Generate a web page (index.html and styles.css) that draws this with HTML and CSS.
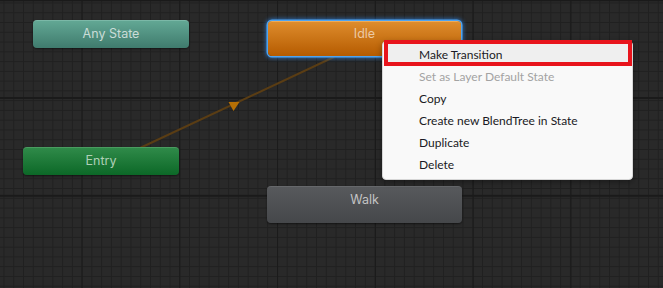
FILE: index.html
```html
<!DOCTYPE html>
<html lang="en">
<head>
    <meta charset="UTF-8">
    <title>Animator</title>
    <link rel="stylesheet" href="styles.css">
</head>
<body>
    <div class="graph">
        <svg class="links" width="663" height="288" viewBox="0 0 663 288">
            <line x1="140" y1="148" x2="334" y2="57" stroke="#5a3d14" stroke-width="2"/>
            <polygon points="228.5,102 239.5,102 233.5,111" fill="#b56f05"/>
        </svg>

        <div class="node any-state">Any State</div>
        <div class="node idle">Idle</div>
        <div class="node entry">Entry</div>
        <div class="node walk">Walk</div>

        <div class="context-menu">
            <div class="menu-item hover">Make Transition</div>
            <div class="menu-item disabled">Set as Layer Default State</div>
            <div class="menu-item">Copy</div>
            <div class="menu-item">Create new BlendTree in State</div>
            <div class="menu-item">Duplicate</div>
            <div class="menu-item">Delete</div>
        </div>
        <div class="highlight-box"></div>
    </div>
</body>
</html>
```

FILE: styles.css
```css
body {
    margin: 0;
    background: #282828;
}
.graph {
    position: relative;
    width: 663px;
    height: 288px;
    overflow: hidden;
    background-color: #292929;
    background-image:
        linear-gradient(to right, #1a1a1a 1px, transparent 1px),
        linear-gradient(to bottom, #1a1a1a 2px, transparent 2px),
        linear-gradient(to right, #202020 1px, transparent 1px),
        linear-gradient(to bottom, #202020 1px, transparent 1px);
    background-size: 97.8px 97.8px, 97.8px 97.8px, 9.78px 9.78px, 9.78px 9.78px;
    background-position: 81.5px 0, 0 97px, 3.5px 0, 0 2.5px;
    font-family: Inter, "Noto Sans", sans-serif;
}
.links {
    position: absolute;
    left: 0;
    top: 0;
}
.node {
    position: absolute;
    box-sizing: border-box;
    border-radius: 4px;
    padding-top: 6px;
    text-align: center;
    font-size: 12.5px;
    line-height: 16px;
    box-shadow: 0 1px 2px rgba(0, 0, 0, 0.5);
}
.any-state {
    left: 33px;
    top: 20px;
    width: 156px;
    height: 28px;
    color: #c9dcd7;
    background: linear-gradient(#62a794, #3f7b6d);
    border-top: 1px solid #7bb8a7;
    padding-top: 5px;
}
.entry {
    left: 23px;
    top: 147px;
    width: 156px;
    height: 28px;
    color: #b0d0b8;
    background: linear-gradient(#2f8a49, #0c6827);
    border-top: 1px solid #4a9c60;
    padding-top: 5px;
}
.idle {
    left: 268px;
    top: 21px;
    width: 193px;
    height: 35px;
    color: #ecc9a4;
    background: linear-gradient(#de8c2c, #b55b00);
    border-top: 1px solid #eeaa55;
    padding-top: 4px;
    box-shadow: 0 0 0 1.5px #4fa4f0, 0 0 4px 2px rgba(45, 135, 235, 0.75);
}
.walk {
    left: 267px;
    top: 186px;
    width: 195px;
    height: 37px;
    color: #c4c4c4;
    background: linear-gradient(#57595c, #45474a);
    border-top: 1px solid #66686b;
    padding-top: 5px;
}
.context-menu {
    position: absolute;
    left: 382px;
    top: 41px;
    width: 251px;
    box-sizing: border-box;
    padding: 2px 0 3px;
    background: #f9f9f9;
    border: 1px solid #d6d6d6;
    border-radius: 4px;
    box-shadow: 0 2px 6px rgba(0, 0, 0, 0.35);
    font-family: Lato, "Noto Sans", sans-serif;
    font-size: 12px;
    color: #1a1a24;
}
.menu-item {
    height: 22px;
    line-height: 22px;
    padding-left: 32px;
    margin: 0 4px;
    white-space: nowrap;
}
.menu-item.hover {
    background: #efefef;
}
.menu-item.disabled {
    color: #a3a3a3;
}
.highlight-box {
    position: absolute;
    left: 384px;
    top: 40px;
    width: 248px;
    height: 26px;
    box-sizing: border-box;
    border: 4px solid #e8141c;
}
```
